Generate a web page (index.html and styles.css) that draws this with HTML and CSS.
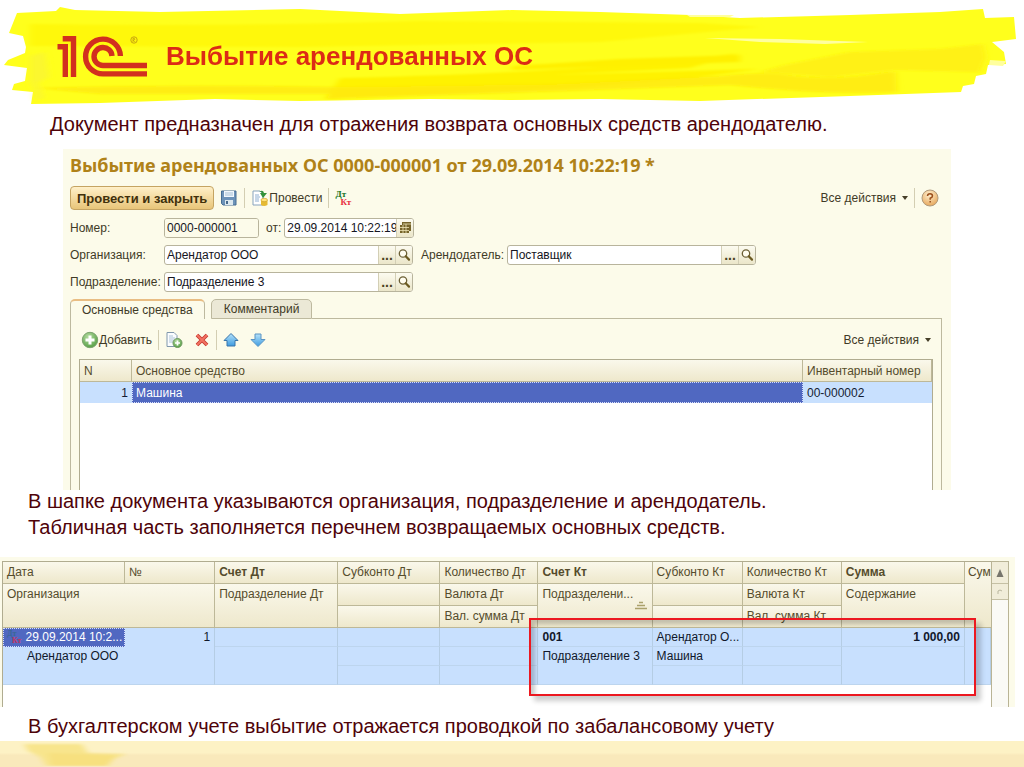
FILE: index.html
```html
<!DOCTYPE html>
<html lang="ru">
<head>
<meta charset="utf-8">
<title>Выбытие арендованных ОС</title>
<meta name="viewport" content="width=device-width, initial-scale=1">
<link rel="stylesheet" href="styles.css">
</head>
<body>
<svg width="0" height="0" class="defs" aria-hidden="true">
  <defs>
    <linearGradient id="blue" x1="0" y1="0" x2="0" y2="1"><stop offset="0" stop-color="#b5e2fa"/><stop offset="1" stop-color="#3d9be0"/></linearGradient>
    <radialGradient id="green" cx=".4" cy=".3" r=".8"><stop offset="0" stop-color="#b4dba0"/><stop offset="1" stop-color="#4d9a3c"/></radialGradient>
    <radialGradient id="orange" cx=".45" cy=".3" r=".8"><stop offset="0" stop-color="#fff0d0"/><stop offset="1" stop-color="#e29d4c"/></radialGradient>
    <filter id="soft" x="-5%" y="-20%" width="110%" height="140%"><feGaussianBlur stdDeviation="3 1"/></filter>
    <symbol id="lens" viewBox="0 0 14 14"><circle cx="6" cy="5.5" r="3.7" fill="#fffdf0" stroke="#6b5f35" stroke-width="1.3"/><path d="M8.7 8.3 12 11.6" stroke="#6b5a20" stroke-width="2.2" stroke-linecap="round"/></symbol>
  </defs>
</svg>
<div class="slide">
  <header class="banner">
    <svg class="banner-paint" viewBox="0 0 1024 104" preserveAspectRatio="none" aria-hidden="true">
      <path fill="#ffff1c" d="M17 13 56 11 60 7 75 10 160 12 300 9 400 14 512 10 600 12 690 15 740 18 850 15 940 12 983 9 985 18 1014 17 1016 39 992 42 1004 52 1006 64 988 65 986 74 976 76 974 84 963 86 961 92 850 96 700 101 600 99 512 100 430 99 300 101 215 99 100 103 31 104 33 92 12 90 14 84 25 81 27 68 4 65 8 60 25 53 26 47 23 36 9 33Z"/>
      <g filter="url(#soft)">
        <path fill="#fff30a" d="M30 24Q220 27 420 21L700 23 760 27 600 42 300 47 30 46Z" opacity=".6"/>
        <path fill="#fff200" d="M340 78Q600 72 740 53L690 68 550 75 760 69 690 78 560 88 325 99Z"/>
        <path fill="#ffe70a" d="M35 88Q180 84 340 87L560 84 720 76Q760 72 780 74 830 82 888 72L896 72 897 92Q820 95 730 85L510 93 325 99 330 94 100 94Z" opacity=".75"/>
        <path fill="#fff000" d="M512 66 620 59 740 55 740 62 512 70Z"/>
        <path fill="#fff114" d="M785 65 850 52 940 49 983 44 986 57 980 72 896 70 830 77 760 72Z"/>
        <path fill="#f9f13b" d="M30 56 45 52 49 77 38 83 44 98 34 100 35 92 30 81Z" opacity=".6"/>
      </g>
      <path fill="#ffff9e" d="M705 38 780 39 868 42 825 44 760 42ZM687 15 734 15 730 17 690 17ZM990 60 1006 61 1003 66 989 65Z"/>
    </svg>
    <svg class="logo" viewBox="0 0 92 44" role="img" aria-label="1С">
      <g fill="none" stroke="#d2301f" stroke-width="5.400">
        <path d="M1.500 12.700H9.300V43M6.700 4.700H17.500V43"/>
        <path d="M64.400 22A17.400 17.400 0 1 0 47 39.900H91"/>
        <path d="M56 22A9 9 0 1 0 47 31.500H91"/>
      </g>
      <circle cx="78" cy="6" r="3.200" fill="none" stroke="#b18412" stroke-width=".7"/>
      <path d="M77 8V4.300H78.300Q80 5.400 77.300 6.100L79.200 8" fill="none" stroke="#b18412" stroke-width=".6"/>
    </svg>
    <h1>Выбытие арендованных ОС</h1>
  </header>

  <p class="note intro">Документ предназначен для отражения возврата основных средств арендодателю.</p>

  <section class="document">
    <h2>Выбытие арендованных ОС 0000-000001 от 29.09.2014 10:22:19 *</h2>
    <div class="toolbar main-tools">
      <button class="primary">Провести и закрыть</button>
      <button class="tool" aria-label="Записать"><svg width="18" height="18" viewBox="0 0 18 18"><path d="M2 2H16V16H3L1.500 14.500V2Z" fill="#6d93b9" stroke="#466d93"/><path d="M4 2H14V8H4Z" fill="#f2f8fd"/><path d="M5 4H13M5 6H13" stroke="#a5bfd4"/><path d="M5 11H13V16H5Z" fill="#dce8ef"/><path d="M6 12H8V15H6Z" fill="#47698b"/></svg></button>
      <span class="divider"></span>
      <button class="tool"><svg width="18" height="18" viewBox="0 0 18 18"><path d="M2 2H9L12 5V16H2Z" fill="#fff" stroke="#87a3bd"/><path d="M4 6H8M4 8H9M4 10H8M4 12H8" stroke="#8eaed0"/><path d="M8 3Q12 0 13 4H16L12 9 9 4H11Q10 2 8 3Z" fill="#34923a"/><path d="M10 11V16Q13 18 16.500 16V11Z" fill="#e5ba33"/><ellipse cx="13.200" cy="11" rx="3.300" ry="1.700" fill="#ffe27a" stroke="#c99a20" stroke-width=".6"/></svg><span>Провести</span></button>
      <span class="divider"></span>
      <button class="tool dtkt" aria-label="Проводки"><span class="dt">Дт</span><span class="kt">Кт</span></button>
      <span class="grow"></span>
      <button class="tool menu">Все действия</button>
      <span class="divider"></span>
      <button class="tool" aria-label="Справка"><svg width="18" height="18" viewBox="0 0 18 18"><circle cx="9" cy="9" r="8" fill="url(#orange)" stroke="#b09a7c"/><path d="M6.500 7Q6.500 4.700 9 4.700T11.500 7Q11.500 8.300 9.200 9.300V10.800M9.200 12V13.600" fill="none" stroke="#9a4f1c" stroke-width="1.500"/></svg></button>
    </div>

    <form class="fields">
      <div class="row">
        <label class="first" for="num">Номер:</label>
        <span class="field number"><input id="num" value="0000-000001"></span>
        <label class="from" for="date">от:</label>
        <span class="field date"><input id="date" value="29.09.2014 10:22:19"><button type="button" aria-label="Календарь"><svg width="12" height="14" viewBox="0 0 12 14"><path d="M3 1H12V10H10V12H1V4H3Z" fill="#75642a"/><path d="M1 6.500H10M1 9.500H10M4 4V12M7 3V12M4 3H12" stroke="#eee5b7" stroke-width=".8"/></svg></button></span>
      </div>
      <div class="row">
        <label class="first" for="org">Организация:</label>
        <span class="field wide"><input id="org" value="Арендатор ООО"><button type="button" class="dots">...</button><button type="button" aria-label="Открыть"><svg width="14" height="14"><use href="#lens"/></svg></button></span>
        <label class="lessor" for="les">Арендодатель:</label>
        <span class="field wide"><input id="les" value="Поставщик"><button type="button" class="dots">...</button><button type="button" aria-label="Открыть"><svg width="14" height="14"><use href="#lens"/></svg></button></span>
      </div>
      <div class="row">
        <label class="first" for="dep">Подразделение:</label>
        <span class="field wide"><input id="dep" value="Подразделение 3"><button type="button" class="dots">...</button><button type="button" aria-label="Открыть"><svg width="14" height="14"><use href="#lens"/></svg></button></span>
      </div>
    </form>

    <div class="tabs">
      <button class="tab active">Основные средства</button>
      <button class="tab">Комментарий</button>
      <span class="tab-line"></span>
    </div>
    <div class="tab-body">
      <div class="toolbar">
        <button class="tool"><svg width="18" height="18" viewBox="0 0 18 18"><circle cx="9" cy="9" r="7.700" fill="url(#green)" stroke="#7ca36f"/><path d="M9 4.500V13.500M4.500 9H13.500" stroke="#fff" stroke-width="3"/></svg><span>Добавить</span></button>
        <span class="divider"></span>
        <button class="tool" aria-label="Скопировать"><svg width="18" height="18" viewBox="0 0 18 18"><path d="M2 1.500H9L12 4.500V15.500H2Z" fill="#fbfdff" stroke="#8198ad"/><path d="M4 5H8M4 7H10M4 9H9M4 11H8" stroke="#adc3d7"/><circle cx="12.500" cy="12" r="4.500" fill="url(#green)" stroke="#6d985f"/><path d="M12.500 9.500V14.500M10 12H15" stroke="#fff" stroke-width="1.700"/></svg></button>
        <button class="tool spaced" aria-label="Удалить"><svg width="16" height="16" viewBox="0 0 16 16"><path d="M3 3 13 13M13 3 3 13" stroke="#c63a30" stroke-width="3.800"/><path d="M3 3 13 13M13 3 3 13" stroke="#f27262" stroke-width="2"/></svg></button>
        <span class="divider"></span>
        <button class="tool" aria-label="Вверх"><svg width="16" height="16" viewBox="0 0 16 16"><path d="M8 1.500 15 8.500H12V14H4V8.500H1Z" fill="url(#blue)" stroke="#3874aa"/></svg></button>
        <button class="tool spaced" aria-label="Вниз"><svg width="16" height="16" viewBox="0 0 16 16"><path d="M8 14.500 15 7.500H11V2H5V7.500H1Z" fill="url(#blue)" stroke="#5a94c3"/></svg></button>
        <span class="grow"></span>
        <button class="tool menu">Все действия</button>
      </div>
      <div class="grid-box">
        <table class="assets">
          <colgroup><col class="c-n"><col><col class="c-inv"></colgroup>
          <thead><tr><th>N</th><th>Основное средство</th><th>Инвентарный номер</th></tr></thead>
          <tbody><tr><td class="num">1</td><td class="selected">Машина</td><td>00-000002</td></tr></tbody>
        </table>
      </div>
    </div>
  </section>

  <p class="note middle">В шапке документа указываются организация, подразделение и арендодатель.<br>Табличная часть заполняется перечнем возвращаемых основных средств.</p>

  <section class="journal">
    <div class="journal-view">
      <table class="entries">
        <colgroup><col class="w122"><col class="w90"><col class="w123"><col class="w102"><col class="w98"><col class="w114"><col class="w90"><col class="w99"><col class="w123"><col class="w26"></colgroup>
        <thead>
          <tr><th>Дата</th><th>№</th><th class="strong">Счет Дт</th><th>Субконто Дт</th><th>Количество Дт</th><th class="strong">Счет Кт</th><th>Субконто Кт</th><th>Количество Кт</th><th class="strong">Сумма</th><th rowspan="3" class="cut">Сумм</th></tr>
          <tr><th colspan="2" rowspan="2">Организация</th><th rowspan="2">Подразделение Дт</th><th></th><th>Валюта Дт</th><th rowspan="2"><span class="sorted">Подразделени...<svg width="14" height="9" viewBox="0 0 14 9"><path d="M5 1.500H9M3 4.500H11M1 7.500H13" stroke="#aaa16b" stroke-width="1.500"/></svg></span></th><th></th><th>Валюта Кт</th><th rowspan="2">Содержание</th></tr>
          <tr><th></th><th>Вал. сумма Дт</th><th></th><th>Вал. сумма Кт</th></tr>
        </thead>
        <tbody>
          <tr><td class="selected date-cell"><span class="entry"><span class="dtkt dim"><span class="dt">Дт</span><span class="kt">Кт</span></span>29.09.2014 10:2...</span></td><td class="num">1</td><td></td><td></td><td></td><td class="strong">001</td><td>Арендатор О...</td><td></td><td class="num strong">1 000,00</td><td rowspan="3"></td></tr>
          <tr><td colspan="2" rowspan="2" class="indent">Арендатор ООО</td><td rowspan="2"></td><td></td><td></td><td rowspan="2">Подразделение 3</td><td>Машина</td><td></td><td rowspan="2"></td></tr>
          <tr><td></td><td></td><td></td><td></td></tr>
        </tbody>
      </table>
    </div>
    <div class="scroll" aria-hidden="true">
      <span class="scroll-up"><svg width="8" height="8" viewBox="0 0 8 8"><path d="M4 0 7.500 8H.5Z" fill="#77756c"/></svg></span>
      <span class="scroll-thumb"><svg width="6" height="6" viewBox="0 0 6 6"><path d="M1 5V2Q3 0 5 2" fill="none" stroke="#b9b69e"/></svg></span>
    </div>
    <div class="highlight"></div>
  </section>

  <p class="note last">В бухгалтерском учете выбытие отражается проводкой по забалансовому учету</p>
  <footer class="footer"><svg width="130" height="25" viewBox="0 0 130 25" aria-hidden="true"><g filter="url(#soft)"><path d="M24 3H82L88 12 126 13 114 18 108 25H46L40 16 28 10Z" fill="#f8e58d"/><path d="M48 12 116 14 106 25H52Z" fill="#f6dc76" opacity=".6"/></g></svg></footer>
</div>
</body>
</html>
```
FILE: styles.css
```css
* { box-sizing: border-box; }
body { margin: 0; background: #fff; font-family: "Liberation Sans", Arial, sans-serif; font-size: 12px; color: #3f3a26; }
h1, h2, p { margin: 0; }
button, input { font: inherit; color: inherit; padding: 0; margin: 0; border: 0; background: none; }
.defs { position: absolute; }
.slide { min-height: 100vh; display: flex; flex-direction: column; }

.banner { position: relative; height: 104px; display: flex; align-items: center; padding: 8px 56px 0; gap: 18px; }
.banner-paint { position: absolute; inset: 0; width: 100%; height: 100%; }
.logo { position: relative; width: 92px; height: 44px; }
.banner h1 { position: relative; font-size: 26px; line-height: 32px; color: #dc2b16; }

.note { font-size: 20px; line-height: 26px; color: #4f0309; padding: 0 28px; }
.intro { padding-left: 50px; margin-top: 7px; }
.middle { margin-top: -2px; }
.last { margin-top: 6px; }

.document { margin: 12px 73px 0 63px; padding: 4px 9px 0 7px; background: #fcfbea; }
.document h2 { font-family: "Noto Sans", "Open Sans", sans-serif; font-size: 18px; line-height: 24px; color: #b08218; }
.toolbar { display: flex; align-items: center; height: 24px; gap: 6px; }
.main-tools { margin-top: 9px; padding-right: 3px; }
.grow { flex: 1; }
.primary { height: 24px; padding: 0 6px; border: 1px solid #c5a462; border-radius: 4px; background: linear-gradient(#fff0c8, #e8c579); font-weight: bold; font-size: 13px; color: #41300b; }
.tool { display: flex; align-items: center; white-space: nowrap; }
.spaced { margin-left: 5px; }
.divider { width: 1px; height: 20px; background: #d3ceb2; }
.menu::after { content: ""; border: 3px solid transparent; border-top: 4px solid #463f28; border-bottom: 0; margin-left: 6px; }
.dtkt { display: flex; flex-direction: column; align-items: flex-start; gap: 0; font-family: "Liberation Serif", serif; font-weight: bold; font-size: 9px; line-height: 8px; }
.dt { color: #16731d; }
.kt { color: #e82c3d; padding-left: 5px; }

.fields { display: flex; flex-direction: column; gap: 7px; margin-top: 8px; }
.row { display: flex; align-items: center; }
.first { width: 94px; }
.from { margin: 0 3px 0 7px; }
.lessor { width: 86px; margin-left: 8px; }
.field { display: flex; height: 20px; border: 1px solid #b8b49c; border-radius: 3px; background: #fff; overflow: hidden; color: #151522; }
.field input { flex: 1; min-width: 0; padding: 0 2px; }
.field button { width: 17px; display: flex; align-items: center; justify-content: center; border-left: 1px solid #d3cfb5; background: linear-gradient(#fcfbf0, #ebe6c9); color: #4b421f; }
.number { width: 95px; }
.number input { background: #fcfbea; }
.date { width: 130px; }
.date input { padding: 0 0 0 2px; }
.wide { width: 249px; }
.field .dots { font-weight: bold; font-size: 14px; }

.tabs { display: flex; margin-top: 7px; height: 20px; }
.tab { border: 1px solid #bdb99f; border-radius: 5px 5px 0 0; background: #ebe8d6; padding: 0 12px; margin-left: 6px; }
.tab.active { margin-left: 0; background: #fcfbea; border-bottom: 0; border-top: 2px solid #e9bd83; padding: 0 11px; }
.tab-line { flex: 1; }
.tab, .tab-line { border-bottom: 1px solid #bdb99f; }
.tab-body { border: 1px solid #bdb99f; border-width: 0 1px; padding: 9px 8px 0; }
.tab-body .toolbar { padding: 0 2px; }
.grid-box { margin-top: 7px; height: 131px; background: #fff; border: 1px solid #b0ac90; border-bottom: 0; }
table { width: 100%; table-layout: fixed; border-collapse: separate; border-spacing: 0; }
th { text-align: left; font-weight: normal; color: #554c2c; background: linear-gradient(#faf8eb, #eee8cc); border-right: 1px solid #bdb898; border-bottom: 1px solid #bdb898; }
.strong { font-weight: bold; font-size: 12px; }
.c-n { width: 52px; }
.c-inv { width: 129px; }
.assets th, .assets td { padding: 0 4px; }
.assets th { height: 22px; }
.assets td { height: 21px; background: #c8e0fe; color: #151d33; }
td.num { text-align: right; }
.assets td.selected, .entries td.selected { background: #5068c1; color: #fff; outline: 1px dotted #d7defa; outline-offset: -1px; }

.journal { position: relative; display: flex; margin: 17px 9px 0 0; padding: 4px 6px 0 2px; height: 150px; background: #fcfbea; }
.journal-view { flex: 1; min-width: 0; background: #fff; border: 1px solid #b0ac90; border-width: 1px 0 0 1px; }
.entries th, .entries td { padding: 3px 4px 0; vertical-align: top; line-height: 14px; white-space: nowrap; overflow: hidden; }
.entries th { height: 22px; }
.entries td { height: 19px; padding-top: 2px; background: #c8e0fe; border-right: 1px solid #b5cde4; border-bottom: 1px solid #bdd5ee; color: #10182b; }
.entries tbody .date-cell, .entries tbody .date-cell + td { border-bottom: 0; }
.entries .date-cell { border-right: 0; }
.entries .indent { padding-left: 24px; }
.entries .cut { border-right: 0; padding: 3px 0 0 3px; }
.w122 { width: 122px; } .w90 { width: 90px; } .w123 { width: 123px; } .w102 { width: 102px; } .w98 { width: 98px; }
.w114 { width: 114px; } .w99 { width: 99px; } .w26 { width: 26px; }
.sorted { display: flex; flex-direction: column; }
.sorted svg { align-self: flex-end; }
.entry { display: flex; gap: 4px; }
.dim { width: 16px; font-size: 8px; line-height: 7px; }
.dim .dt { color: #3a6796; }
.dim .kt { color: #c03561; }
.scroll { width: 18px; display: flex; flex-direction: column; border: 1px solid #b9b495; border-bottom: 0; background: #fafaf6; }
.scroll span { display: flex; align-items: center; justify-content: center; background: #f1edd9; border-bottom: 1px solid #c5c0a4; }
.scroll-up { height: 22px; }
.scroll-thumb { height: 16px; }
.highlight { position: absolute; left: 529px; right: 39px; top: 61px; height: 78px; border: 2px solid #ec1820; box-shadow: 5px 5px 5px #0003, inset 4px 4px 4px #0003; pointer-events: none; }
.footer { flex: 1; min-height: 25px; margin-top: 2px; background: linear-gradient(#fdf2c5 45%, #f9e9bb 55%); }
.footer svg { display: block; }
```
